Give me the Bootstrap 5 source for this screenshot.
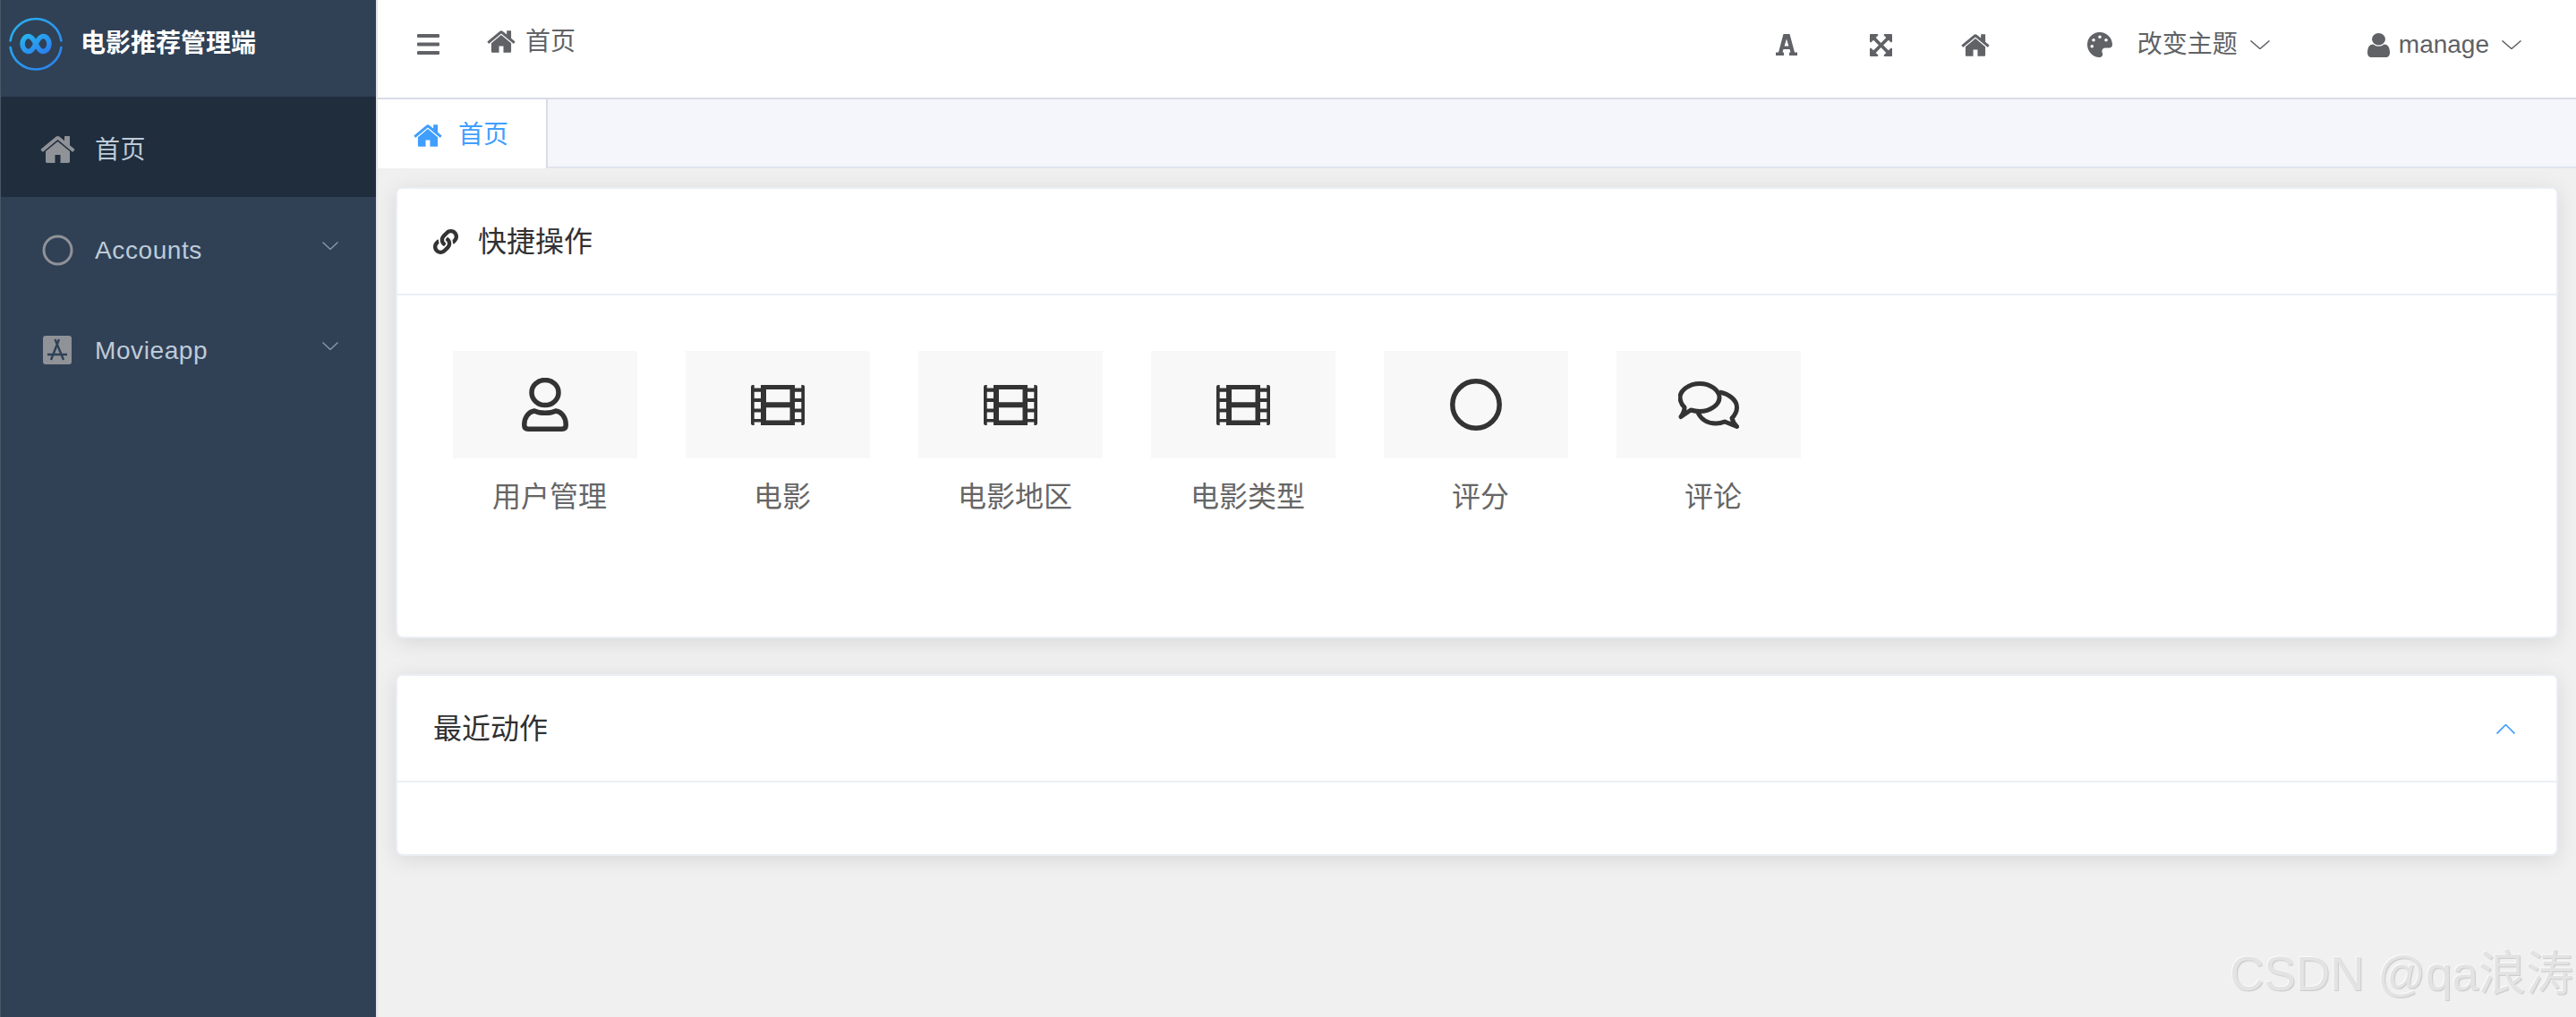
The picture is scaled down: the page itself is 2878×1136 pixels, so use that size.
<!DOCTYPE html>
<html lang="zh-CN">
<head>
<meta charset="utf-8">
<title>电影推荐管理端</title>
<link href="https://cdn.jsdelivr.net/npm/bootstrap@5.3.0/dist/css/bootstrap.min.css" rel="stylesheet">
<style>
html,body{height:100%;}
body{font-family:"Liberation Sans","Noto Sans CJK SC",sans-serif;background:#f0f0f0;overflow:hidden;color:#333;}
.shell{height:1136px;}
svg{flex:none;display:block;}
.rail{width:420px;flex:none;background:#304156;border-left:1px solid #4a5766;}
.rail-head{height:108px;padding-left:9px;padding-bottom:10px;}
.rail-title{font-size:28px;font-weight:700;color:#fff;margin-left:20px;line-height:1;}
.logo-mark{width:60px;height:60px;}
.rail-item{height:112px;padding-left:44px;padding-right:42px;color:#bfcbd9;font-size:28px;letter-spacing:.6px;text-decoration:none;}
.rail-item.on{background:#1f2d3d;}
.rail-item span{padding-top:7px;}
.rail-ic{width:39px;height:32px;fill:#8f9297;margin-right:22px;margin-top:5px;}
.rail-ring{width:35px;height:35px;margin-left:2px;margin-right:24px;margin-top:6px;}
.rail-app{width:32px;height:32px;margin-left:3px;margin-right:26px;margin-top:5px;}
.rail-arrow{width:18px;height:9px;margin-left:auto;margin-bottom:3px;stroke:#8f9ba9;stroke-width:1.3;}
.workspace{min-width:0;border-left:2px solid #dfe3ea;}
.topper{height:111px;background:#fff;border-bottom:2px solid #d8dce5;padding-left:44px;padding-right:61px;color:#606266;font-size:28px;}
.topper svg{fill:#606266;}
.ic-bars{width:25px;height:23px;margin-right:53px;margin-bottom:10px;}
.crumb{margin-bottom:16px;}
.ic-crumb{width:32px;height:25px;margin-right:11px;}
.right-tools{margin-bottom:9px;}
.ic-font{width:24px;height:24px;}
.ic-full{width:25px;height:25px;margin-left:81px;}
.ic-home2{width:32px;height:25px;margin-left:77px;}
.ic-pal{width:30px;height:28px;margin-left:108px;margin-right:27px;}
.ic-user{width:25px;height:27px;margin-left:109px;margin-right:10px;}
.menu-arrow{width:22px;height:10px;margin-left:14px;fill:none!important;stroke:#606266;stroke-width:1.5;}
.tabbar{height:77px;background:#f4f6fb;border-bottom:2px solid #e0e4ee;}
.tab-on{width:190px;height:77px;background:#fff;border-right:2px solid #d8dce5;color:#409eff;font-size:28px;padding-left:40px;padding-top:3px;margin-bottom:-2px;}
.ic-tab{width:32px;height:25px;fill:#409eff;margin-right:18px;}
.canvas{padding:21px 20px 0 20px;position:relative;}
.panel{border:2px solid #ebeef5;border-radius:8px;box-shadow:0 4px 24px rgba(0,0,0,.1);background:#fff;}
.panel-top{background:#fff;border-bottom:2px solid #ebeef5;height:119px;padding:0 40px;font-size:32px;color:#303133;}
.panel-one{height:504px;margin-bottom:40px;}
.panel-two{height:203px;}
.ic-link{width:28px;height:28px;margin-right:22px;fill:#333;}
.ic-up{width:21px;height:11px;margin-left:auto;stroke:#409eff;stroke-width:1.6;margin-right:6px;margin-top:1px;}
.shortcut-list{padding:62px 0 0 62px;gap:54px;}
.shortcut{width:206px;text-decoration:none;color:#606266;}
.shortcut-box{height:120px;background:#f8f8f8;}
.shortcut-name{font-size:32px;line-height:1;margin-top:27px;padding-left:10px;text-align:center;color:#666;}
.sc-user{width:52px;height:60px;}
.sc-film{width:60px;height:45px;fill:#333;}
.sc-ring{width:58px;height:58px;}
.sc-talk{width:68px;height:53px;}
.stamp{position:absolute;right:3px;bottom:16px;font-size:53px;line-height:1.2;color:#e3e3e3;text-shadow:1px 1px 1px #c8c8c8,-1px -1px 0 #fafafa;white-space:nowrap;}
</style>
</head>
<body>
<svg class="d-none">
<symbol id="s-home" viewBox="64 256 1664 1280"><path d="M1472 992v480q0 26-19 45t-45 19h-384v-384h-256v384h-384q-26 0-45-19t-19-45v-480q0-1 .5-3t.5-3l575-474 575 474q1 2 1 6zm223-69l-62 74q-8 9-21 11h-3q-13 0-21-7l-692-577-692 577q-12 8-24 7-13-2-21-11l-62-74q-8-10-7-23.500t11-21.500l719-599q32-26 76-26t76 26l244 204v-195q0-14 9-23t23-9h192q14 0 23 9t9 23v408l219 182q10 8 11 21.500t-7 23.500z"/></symbol>
<symbol id="s-film" viewBox="0 0 60 45"><path fill-rule="evenodd" d="M2 0H58Q60 0 60 2V43Q60 45 58 45H2Q0 45 0 43V2Q0 0 2 0ZM3.700 0V3.500H11V0ZM49 0V3.500H56.300V0ZM3.700 41.500V45H11V41.500ZM49 41.500V45H56.300V41.500ZM3.700 7.700V15H11V7.700ZM3.700 19V26.500H11V19ZM3.700 30.500V38H11V30.500ZM17 5V19.300H43.500V5ZM17 25.300V39.500H43.500V25.300ZM49 7.700V15H56.300V7.700ZM49 19V26.500H56.300V19ZM49 30.500V38H56.300V30.500Z"/></symbol>
</svg>
<div class="shell d-flex">
  <aside class="rail d-flex flex-column">
    <div class="rail-head d-flex align-items-center">
      <svg class="logo-mark" viewBox="10 19 60 60" fill="none" stroke-linecap="round">
        <defs><linearGradient id="lg" x1="0" y1="0" x2="1" y2="1"><stop offset="0" stop-color="#27b4ee"/><stop offset="1" stop-color="#2b7ff0"/></linearGradient></defs>
        <path d="M11.600 45.500A28.700 28.700 0 0 1 68.400 45.500M11.600 53A28.700 28.700 0 0 0 68.400 53" stroke="url(#lg)" stroke-width="2.600"/>
        <path d="M40 49C37 43 35 40.500 32 40.500A7 8.500 0 0 0 32 57.500C35 57.500 37 55 40 49C43 43 45 40.500 48 40.500A7 8.500 0 0 1 48 57.500C45 57.500 43 55 40 49" stroke="url(#lg)" stroke-width="5.500"/>
      </svg>
      <div class="rail-title">电影推荐管理端</div>
    </div>
    <nav class="nav flex-column">
      <a class="rail-item on d-flex align-items-center" href="#"><svg class="rail-ic"><use href="#s-home"/></svg><span>首页</span></a>
      <a class="rail-item d-flex align-items-center" href="#"><svg class="rail-ring" viewBox="0 0 35 35"><circle cx="17.500" cy="17.500" r="15.500" fill="none" stroke="#8f9297" stroke-width="3"/></svg><span>Accounts</span><svg class="rail-arrow" viewBox="0 0 18 9" fill="none"><path d="M.5.500L9 8.500L17.500.500"/></svg></a>
      <a class="rail-item d-flex align-items-center" href="#"><svg class="rail-app" viewBox="0 0 32 32"><rect width="32" height="32" rx="3" fill="#8f9297"/><path d="M13.500 4L23 27M18 4L9 27M5 21H27" stroke="#304156" stroke-width="2.400" fill="none"/></svg><span>Movieapp</span><svg class="rail-arrow" viewBox="0 0 18 9" fill="none"><path d="M.5.500L9 8.500L17.500.500"/></svg></a>
    </nav>
  </aside>
  <main class="workspace flex-grow-1 d-flex flex-column">
    <header class="topper d-flex align-items-center">
      <svg class="ic-bars" viewBox="0 0 25 23"><rect y="0" width="25" height="4" rx="1"/><rect y="9.500" width="25" height="4" rx="1"/><rect y="19" width="25" height="4" rx="1"/></svg>
      <div class="crumb d-flex align-items-center"><svg class="ic-crumb"><use href="#s-home"/></svg>首页</div>
      <div class="right-tools ms-auto d-flex align-items-center">
        <svg class="ic-font" viewBox="0 0 24 24"><path fill-rule="evenodd" d="M8.500 0H15.500L21 20.500H24V24H15V20.500H16.500L15.500 17H8.500L7.500 20.500H9V24H0V20.500H3ZM12 5.500L9.600 13.500H14.400Z"/></svg>
        <svg class="ic-full" viewBox="128 128 1536 1536"><path d="M1411 541l-355 355 355 355 144-144q29-31 70-14 39 17 39 59v448q0 26-19 45t-45 19h-448q-42 0-59-40-17-39 14-69l144-144-355-355-355 355 144 144q31 30 14 69-17 40-59 40h-448q-26 0-45-19t-19-45v-448q0-42 40-59 39-17 69 14l144 144 355-355-355-355-144 144q-19 19-45 19-12 0-24-5-40-17-40-59v-448q0-26 19-45t45-19h448q42 0 59 40 17 39-14 69l-144 144 355 355 355-355-144-144q-31-30-14-69 17-40 59-40h448q26 0 45 19t19 45v448q0 42-39 59-13 5-25 5-26 0-45-19z"/></svg>
        <svg class="ic-home2"><use href="#s-home"/></svg>
        <svg class="ic-pal" viewBox="0 0 512 512"><path d="M204.300 5C104.900 24.400 24.800 104.300 5.200 203.400c-37 187 131.700 326.400 258.800 306.700 41.200-6.400 61.400-54.600 42.500-91.700-23.100-45.400 9.900-98.400 60.900-98.400h79.700c35.800 0 64.800-29.600 64.900-65.300C511.500 97.100 368.100-26.900 204.300 5zM96 320c-17.700 0-32-14.300-32-32s14.300-32 32-32 32 14.300 32 32-14.300 32-32 32zm32-128c-17.700 0-32-14.300-32-32s14.300-32 32-32 32 14.300 32 32-14.300 32-32 32zm128-64c-17.700 0-32-14.300-32-32s14.300-32 32-32 32 14.300 32 32-14.300 32-32 32zm128 64c-17.700 0-32-14.300-32-32s14.300-32 32-32 32 14.300 32 32-14.300 32-32 32z"/></svg>
        <span>改变主题</span>
        <svg class="menu-arrow" viewBox="0 0 22 10"><path d="M.5.500L11 9.500L21.500.500"/></svg>
        <svg class="ic-user" viewBox="256 128 1280 1536" preserveAspectRatio="none"><path d="M1536 1399q0 109-62.500 187t-150.500 78h-854q-88 0-150.500-78t-62.500-187q0-85 8.500-160.500t31.500-152 58.500-131 94-89 134.500-34.500q131 128 313 128t313-128q76 0 134.500 34.500t94 89 58.500 131 31.500 152 8.500 160.500zm-256-887q0 159-112.500 271.500t-271.500 112.500-271.500-112.500-112.500-271.500 112.500-271.500 271.500-112.500 271.500 112.500 112.500 271.500z"/></svg>
        <span>manage</span>
        <svg class="menu-arrow" viewBox="0 0 22 10"><path d="M.5.500L11 9.500L21.500.500"/></svg>
      </div>
    </header>
    <div class="tabbar d-flex">
      <div class="tab-on d-flex align-items-center"><svg class="ic-tab"><use href="#s-home"/></svg>首页</div>
    </div>
    <div class="canvas flex-grow-1">
      <section class="card panel panel-one">
        <div class="card-header panel-top d-flex align-items-center">
          <svg class="ic-link" viewBox="0 0 512 512"><path d="M326.612 185.391c59.747 59.809 58.927 155.698.36 214.59-.11.12-.24.25-.36.37l-67.2 67.2c-59.27 59.27-155.699 59.262-214.96 0-59.27-59.26-59.27-155.7 0-214.96l37.106-37.106c9.84-9.84 26.786-3.3 27.294 10.606.648 17.722 3.826 35.527 9.69 52.721 1.986 5.822.567 12.262-3.783 16.612l-13.087 13.087c-28.026 28.026-28.905 73.66-1.155 101.96 28.024 28.579 74.086 28.749 102.325.51l67.2-67.19c28.191-28.191 28.073-73.757 0-101.83-3.701-3.694-7.429-6.564-10.341-8.569a16.037 16.037 0 0 1-6.947-12.606c-.396-10.567 3.348-21.456 11.698-29.806l21.054-21.055c5.521-5.521 14.182-6.199 20.584-1.731a152.482 152.482 0 0 1 20.522 17.197zM467.547 44.449c-59.261-59.262-155.69-59.27-214.96 0l-67.2 67.2c-.12.12-.25.25-.36.37-58.566 58.892-59.387 154.781.36 214.59a152.454 152.454 0 0 0 20.521 17.196c6.402 4.468 15.064 3.789 20.584-1.731l21.054-21.055c8.35-8.35 12.094-19.239 11.698-29.806a16.037 16.037 0 0 0-6.947-12.606c-2.912-2.005-6.64-4.875-10.341-8.569-28.073-28.073-28.191-73.639 0-101.83l67.2-67.19c28.239-28.239 74.3-28.069 102.325.51 27.75 28.3 26.872 73.934-1.155 101.96l-13.087 13.087c-4.35 4.35-5.769 10.79-3.783 16.612 5.864 17.194 9.042 34.999 9.69 52.721.509 13.906 17.454 20.446 27.294 10.606l37.106-37.106c59.271-59.259 59.271-155.699.001-214.959z"/></svg>
          快捷操作
        </div>
        <div class="shortcut-list d-flex">
          <a class="shortcut" href="#"><div class="shortcut-box d-flex align-items-center justify-content-center"><svg class="sc-user" viewBox="0 0 52 60" fill="none" stroke="#333" stroke-width="5.500"><ellipse cx="26" cy="16.500" rx="15" ry="14"/><path d="M14 37C20 40 32 40 38 37C45 38 49.200 45 49.200 52V53Q49.200 57.200 45 57.200H7Q2.800 57.200 2.800 53V52C2.800 45 7 38 14 37Z"/></svg></div><div class="shortcut-name">用户管理</div></a>
          <a class="shortcut" href="#"><div class="shortcut-box d-flex align-items-center justify-content-center"><svg class="sc-film"><use href="#s-film"/></svg></div><div class="shortcut-name">电影</div></a>
          <a class="shortcut" href="#"><div class="shortcut-box d-flex align-items-center justify-content-center"><svg class="sc-film"><use href="#s-film"/></svg></div><div class="shortcut-name">电影地区</div></a>
          <a class="shortcut" href="#"><div class="shortcut-box d-flex align-items-center justify-content-center"><svg class="sc-film"><use href="#s-film"/></svg></div><div class="shortcut-name">电影类型</div></a>
          <a class="shortcut" href="#"><div class="shortcut-box d-flex align-items-center justify-content-center"><svg class="sc-ring" viewBox="0 0 58 58"><circle cx="29" cy="29" r="26.200" fill="none" stroke="#333" stroke-width="5.500"/></svg></div><div class="shortcut-name">评分</div></a>
          <a class="shortcut" href="#"><div class="shortcut-box d-flex align-items-center justify-content-center"><svg class="sc-talk" viewBox="0 0 68 53" fill="none" stroke="#333" stroke-width="5" stroke-linejoin="round"><path d="M24 2.500C36 2.500 46 10 46 18S36 33.500 24 33.500Q19 33.500 14 32L3 39.500Q7 34 7 29Q2 24 2 18C2 10 12 2.500 24 2.500Z"/><path d="M46 12C57 14 65.500 21 65.500 29C65.500 34 63 38 60 41Q61 46 65.500 50.500L52 45Q47 47 42 47C33 47 26 43 22 35"/></svg></div><div class="shortcut-name">评论</div></a>
        </div>
      </section>
      <section class="card panel panel-two">
        <div class="card-header panel-top d-flex align-items-center">
          最近动作
          <svg class="ic-up" viewBox="0 0 21 11" fill="none"><path d="M.5 10.500L10.500.500L20.500 10.500"/></svg>
        </div>
      </section>
      <div class="stamp">CSDN @qa浪涛</div>
    </div>
  </main>
</div>
<script src="https://cdn.jsdelivr.net/npm/bootstrap@5.3.0/dist/js/bootstrap.bundle.min.js"></script>
</body>
</html>
